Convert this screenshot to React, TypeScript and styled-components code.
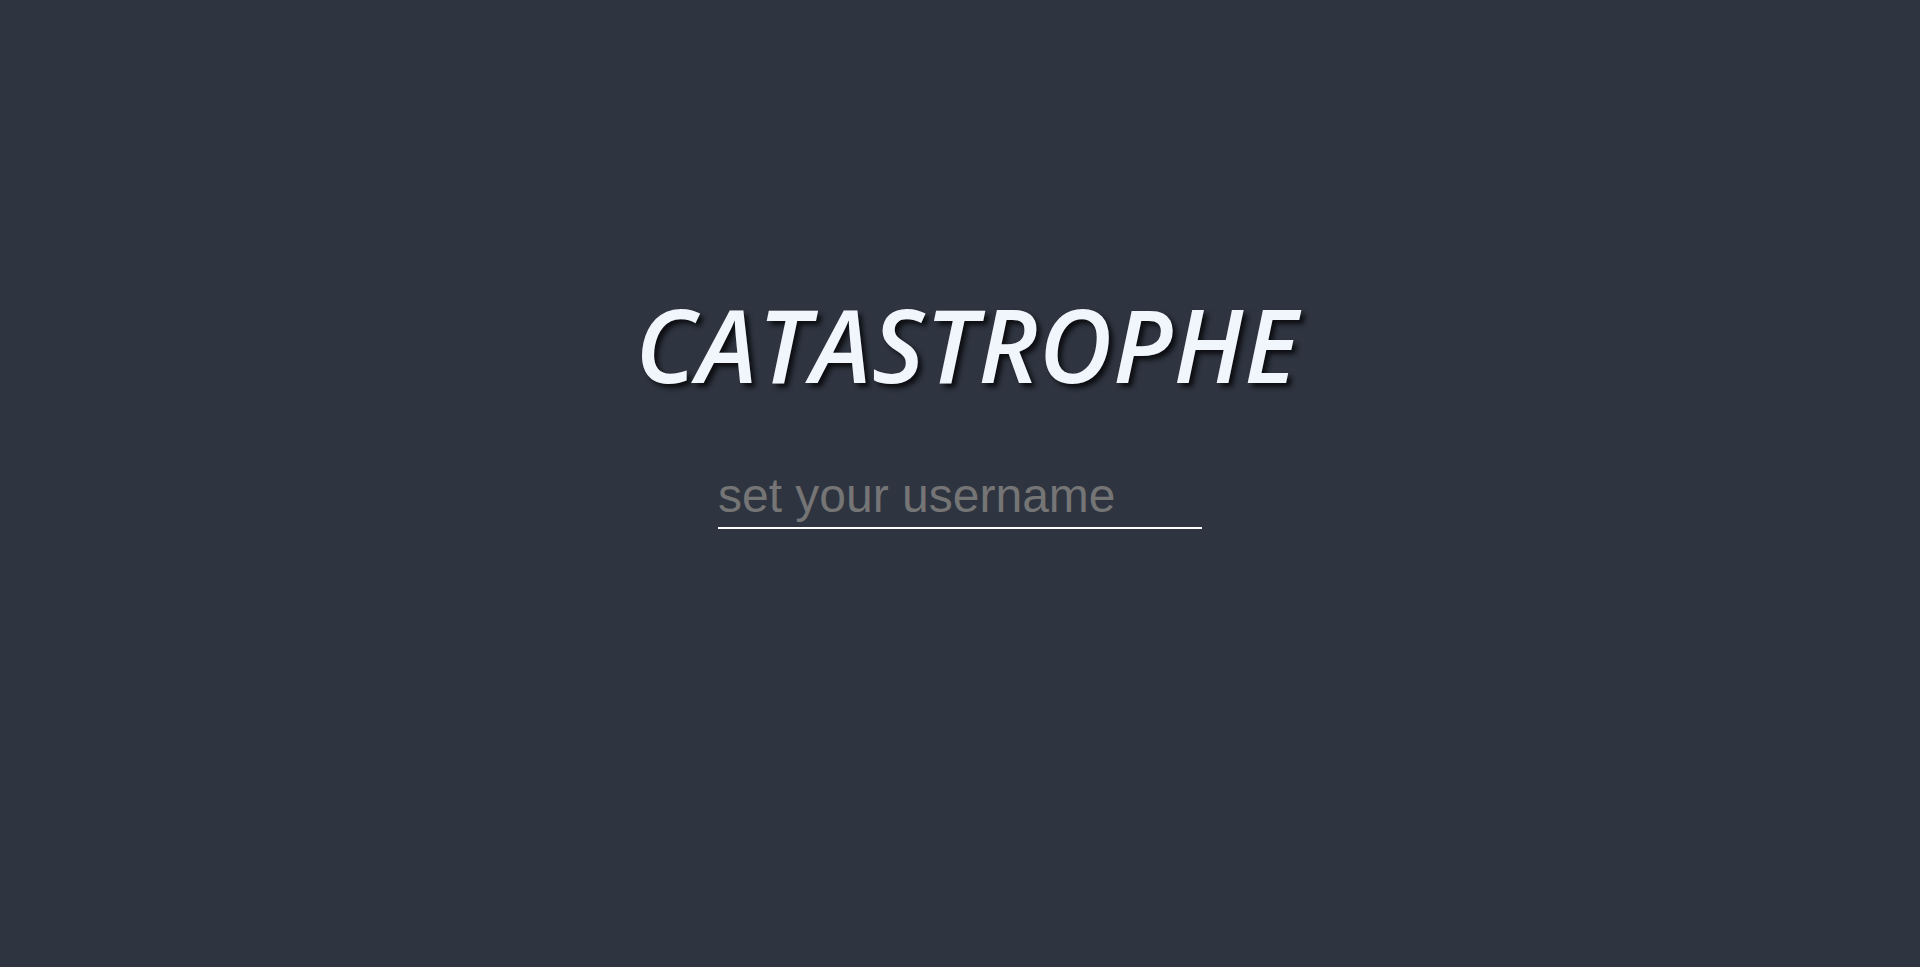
import React from "react";
import styled, { createGlobalStyle } from "styled-components";

const GlobalStyle = createGlobalStyle`
  html, body {
    margin: 0;
    padding: 0;
    background: #2e3440;
  }
  * { box-sizing: border-box; }
`;

const Page = styled.main`
  min-height: 100vh;
  display: flex;
  flex-direction: column;
  align-items: center;
  padding-top: 294px;
  gap: 73px;
  background: #2e3440;
`;

const Title = styled.h1`
  margin: 0 0 0 14px;
  font-family: "Open Sans", "Noto Sans", sans-serif;
  font-style: italic;
  font-weight: 600;
  font-size: 101px;
  line-height: 1;
  letter-spacing: 1px;
  color: #f0f6fc;
  text-shadow: 4px 4px 5px rgba(0, 0, 0, 0.75);
`;

const UsernameInput = styled.input`
  width: 484px;
  margin: 0;
  padding: 0 0 4px 0;
  border: none;
  border-bottom: 2px solid #ffffff;
  background: transparent;
  outline: none;
  font-family: "Liberation Sans", Arial, sans-serif;
  font-size: 48px;
  color: #eceff4;

  &::placeholder {
    color: #757575;
  }
`;

export default function App() {
  return (
    <>
      <GlobalStyle />
      <Page>
        <Title>CATASTROPHE</Title>
        <UsernameInput type="text" placeholder="set your username" />
      </Page>
    </>
  );
}
